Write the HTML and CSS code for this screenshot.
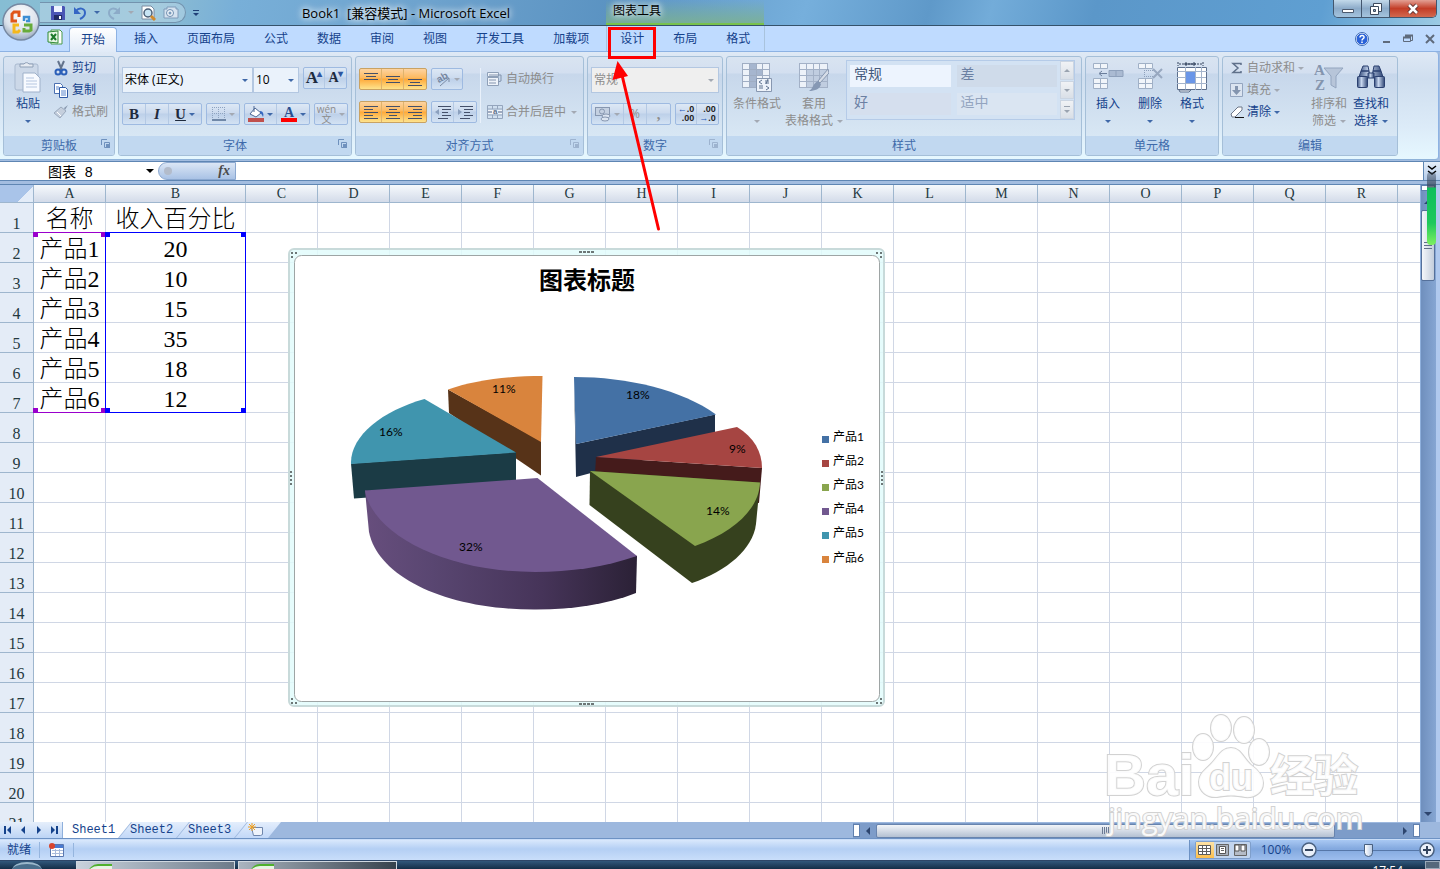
FILE: index.html
```
<!DOCTYPE html>
<html lang="zh-CN">
<head>
    <meta charset="UTF-8">
    <meta name="viewport" content="width=device-width, initial-scale=1.0">
    <title>Book1 - Microsoft Excel</title>
    <link rel="stylesheet" href="styles.css">
</head>
<body>

<!-- Title bar -->
<header class="titlebar">
    <div class="quick-access">
        <button class="qa-btn" aria-label="保存"><svg width="16" height="16" viewBox="0 0 16 16"><path d="M1 1h13l1 1v13H1z" fill="#4a55b5"/><path d="M4 1h8v6H4z" fill="#eef3ff"/><path d="M4 10h8v5H4z" fill="#222c66"/><path d="M9 11h2v3H9z" fill="#fff"/></svg></button>
        <button class="qa-btn undo" aria-label="撤消"><svg width="14" height="14" viewBox="0 0 14 14"><path d="M3 5c3-4 9-3 9 2 0 3-3 5-5 6" fill="none" stroke="#3566c4" stroke-width="2"/><path d="M1 1v7h7z" fill="#3566c4"/></svg><i class="caret"></i></button>
        <button class="qa-btn undo" aria-label="恢复" disabled><svg width="14" height="14" viewBox="0 0 14 14"><path d="M11 5c-3-4-9-3-9 2 0 3 3 5 5 6" fill="none" stroke="#8cabc8" stroke-width="2"/><path d="M13 1v7H6z" fill="#8cabc8"/></svg><i class="caret"></i></button>
        <button class="qa-btn" aria-label="打印预览"><svg width="16" height="16" viewBox="0 0 16 16"><path d="M2 1h9l3 3v10H2z" fill="#fff" stroke="#7a8aa0"/><circle cx="8" cy="8" r="4" fill="#c8e4f4" stroke="#4a5d75" stroke-width="1.500"/><path d="M11 11l4 4" stroke="#d08a2c" stroke-width="3"/></svg></button>
        <button class="qa-btn" aria-label="照相机" disabled><svg width="16" height="16" viewBox="0 0 16 16"><path d="M1 4h3V2h9v2h2v9H1z" fill="#d5e2ef" stroke="#7e9bb9"/><circle cx="7" cy="8" r="3.500" fill="#eef4fa" stroke="#6f8eb0"/><circle cx="7" cy="8" r="1.500" fill="#7a9abb"/></svg></button>
    </div>
    <button class="qa-more" aria-label="自定义快速访问工具栏"><svg width="8" height="8" viewBox="0 0 8 8"><path d="M1 1.500h6" stroke="#1f3f77"/><path d="M1 4h6L4 7z" fill="#1f3f77"/></svg></button>
    <div class="window-title">Book1&nbsp; [兼容模式] - Microsoft Excel</div>
    <div class="context-title">图表工具</div>
    <div class="window-buttons">
        <button aria-label="最小化"><svg width="14" height="12" viewBox="0 0 14 12"><path d="M1.500 6.500h11v3h-11z" fill="#fff" stroke="#4c5a6e"/></svg></button>
        <button aria-label="还原"><svg width="14" height="14" viewBox="0 0 14 14"><path d="M4.500 1.500h8v8h-8z" fill="#fff" stroke="#3d4a5d"/><path d="M1.500 4.500h8v8h-8z" fill="#fff" stroke="#3d4a5d"/><path d="M4.500 7.500h2v2h-2z" fill="#8ea6c2" stroke="#3d4a5d"/></svg></button>
        <button class="close" aria-label="关闭"><svg width="14" height="12" viewBox="0 0 14 12"><path d="M3 2l8 8M11 2l-8 8" stroke="#5a3030" stroke-width="4.500"/><path d="M3 2l8 8M11 2l-8 8" stroke="#fff" stroke-width="2.500"/></svg></button>
    </div>
</header>

<!-- Ribbon tabs -->
<nav class="tabs">
    <svg class="excel-mark" width="16" height="16" viewBox="0 0 16 16"><path d="M4 1h9l2 2v12H4z" fill="#fff" stroke="#4a9a4a"/><path d="M1 3l10-1v12L1 13z" fill="#e9f7e6" stroke="#2f8a35"/><path d="M4 5l5 6M9 5l-5 6" stroke="#1d7a2c" stroke-width="2"/></svg>
    <a href="#" class="tab active">开始</a>
    <a href="#" class="tab">插入</a>
    <a href="#" class="tab">页面布局</a>
    <a href="#" class="tab">公式</a>
    <a href="#" class="tab">数据</a>
    <a href="#" class="tab">审阅</a>
    <a href="#" class="tab">视图</a>
    <a href="#" class="tab">开发工具</a>
    <a href="#" class="tab">加载项</a>
    <div class="context-tabs">
        <a href="#" class="tab">设计</a>
        <a href="#" class="tab">布局</a>
        <a href="#" class="tab">格式</a>
    </div>
    <div class="book-buttons">
        <button aria-label="帮助"><svg width="14" height="14" viewBox="0 0 14 14"><circle cx="7" cy="7" r="6" fill="#2a62d8" stroke="#fff"/><circle cx="7" cy="7" r="6.500" fill="none" stroke="#3c69b4"/><path d="M5 5.500c0-3 4.500-2.500 4 0C8.700 6.800 7 6.800 7 8.500M7 9.500v1.500" fill="none" stroke="#fff" stroke-width="1.500"/></svg></button>
        <button aria-label="最小化窗口"><svg width="10" height="10" viewBox="0 0 10 10"><path d="M2 8h7" stroke="#5f6b7c" stroke-width="2"/></svg></button>
        <button aria-label="还原窗口"><svg width="10" height="10" viewBox="0 0 10 10"><path d="M2.500 3V1.500h7v5H8M.5 3.500h7v4h-7z" fill="none" stroke="#5f6b7c"/><path d="M2 1.500h8M0 3.500h8" stroke="#5f6b7c" stroke-width="2"/></svg></button>
        <button aria-label="关闭窗口"><svg width="10" height="10" viewBox="0 0 10 10"><path d="M1 1l8 8M9 1L1 9" stroke="#5f6b7c" stroke-width="2"/></svg></button>
    </div>
</nav>

<!-- Office button -->
<button class="office-btn" aria-label="Office 按钮">
    <svg width="40" height="40" viewBox="0 0 40 40">
        <defs><radialGradient id="orb" cx="50%" cy="30%" r="75%"><stop offset="0" stop-color="#fff"/><stop offset=".6" stop-color="#dbe2ec"/><stop offset="1" stop-color="#8b9cb3"/></radialGradient></defs>
        <circle cx="20" cy="20" r="18" fill="url(#orb)" stroke="#7688a2" stroke-width="1.500"/>
        <g fill="none" stroke-width="3">
            <path d="M16 19h-5v-7l2-2h5v5" stroke="#e0561b"/>
            <path d="M23 19v-4h5v4h-3" stroke="#3d8fd4" stroke-width="2.500"/>
            <path d="M18 23h-5v7h4l2-2" stroke="#f5b81c"/>
            <path d="M23 23h7v5l-2 1h-5v-3" stroke="#67ab3a"/>
        </g>
    </svg>
</button>

<!-- Ribbon -->
<section class="ribbon">
    <div class="group g-clipboard">
        <div class="group-body">
            <button class="big paste"><svg width="30" height="32" viewBox="0 0 30 32"><rect x="2" y="3" width="23" height="26" rx="2" fill="#ccd8e8" stroke="#a9b9cf"/><path d="M7 6h13V3h-4a3 3 0 0 0-5 0H7z" fill="#e6ebf2" stroke="#8e9fb6"/><path d="M10 12h12l5 5v14H10z" fill="#f7faff" stroke="#9fb1ca"/><path d="M13 17h8M13 20h11M13 23h11M13 26h11" stroke="#b5c6e0"/></svg><span>粘贴</span><i class="caret"></i></button>
            <div class="stack">
                <button class="row-btn"><svg width="16" height="16" viewBox="0 0 16 16"><path d="M5 1l4 9M11 1L7 10" stroke="#63738c" stroke-width="2"/><circle cx="5" cy="12" r="2.500" fill="none" stroke="#2c5fb8" stroke-width="2"/><circle cx="11" cy="12" r="2.500" fill="none" stroke="#2c5fb8" stroke-width="2"/></svg>剪切</button>
                <button class="row-btn"><svg width="16" height="16" viewBox="0 0 16 16"><path d="M1.500 1.500h6l2 2v8h-8z" fill="#fff" stroke="#4a6fb0"/><path d="M6.500 5.500h6l2 2v8h-8z" fill="#fff" stroke="#2f5aa6"/><path d="M3 5h3M3 7h3M8 9h5M8 11h5M8 13h5" stroke="#5a86cc"/></svg>复制</button>
                <button class="row-btn" disabled><svg width="16" height="16" viewBox="0 0 16 16"><path d="M15 1l-4 3 1 2z" fill="#8797ad"/><path d="M8 3l5 4-6 7-6-5z" fill="#c5cfdd" stroke="#9aa9bd"/><path d="M4 8l4 4" stroke="#fff"/></svg>格式刷</button>
            </div>
        </div>
        <div class="caption">剪贴板<svg class="launcher" width="9" height="9" viewBox="0 0 9 9"><path d="M.5 6V.5H6M3.500 3.500h5v5h-5z" fill="none" stroke="#6f91bd"/><path d="M5 5h4v4H5z" fill="#6f91bd"/></svg></div>
    </div>

    <div class="group g-font">
        <div class="group-body rows">
            <div class="line top">
                <div class="combos">
                    <label class="combo font-name"><select aria-label="字体"><option>宋体 (正文)</option></select><i class="caret"></i></label>
                    <label class="combo font-size"><select aria-label="字号"><option>10</option></select><i class="caret"></i></label>
                </div>
                <div class="btns">
                    <button class="serif grow" aria-label="增大字号">A<sup>▴</sup></button>
                    <button class="serif shrink" aria-label="减小字号">A<sup>▾</sup></button>
                </div>
            </div>
            <div class="line">
                <div class="btns"><button class="serif"><b>B</b></button><button class="serif"><em>I</em></button><button class="serif wide"><u>U</u><i class="caret"></i></button></div>
                <div class="btns"><button class="wide" disabled aria-label="边框"><svg width="14" height="14" viewBox="0 0 14 14"><path d="M.5 0v13M6.500 0v13M12.500 0v13M0 .5h13M0 6.500h13" stroke="#8ea3c0" stroke-dasharray="1 1"/><path d="M0 13h14" stroke="#7088a8" stroke-width="2"/></svg><i class="caret"></i></button></div>
                <div class="btns"><button class="wide" aria-label="填充颜色"><svg width="16" height="16" viewBox="0 0 16 16"><path d="M7 2l6 5-5 4-6-3z" fill="#fff" stroke="#4c6794"/><path d="M6 0v6" stroke="#4c6794"/><path d="M12 5c3 0 4 3 3 6-1-2-1-3-3-4z" fill="#3467c0"/><path d="M0 12h16v4H0z" fill="#c0504d"/></svg><i class="caret"></i></button><button class="wide" aria-label="字体颜色"><svg width="16" height="16" viewBox="0 0 16 16"><text class="font-a" x="3" y="11">A</text><path d="M0 12h16v4H0z" fill="#f00"/></svg><i class="caret"></i></button></div>
                <div class="btns"><button class="wide wen" disabled><span>wén<br>文</span><i class="caret"></i></button></div>
            </div>
        </div>
        <div class="caption">字体<svg class="launcher" width="9" height="9" viewBox="0 0 9 9"><path d="M.5 6V.5H6M3.500 3.500h5v5h-5z" fill="none" stroke="#6f91bd"/><path d="M5 5h4v4H5z" fill="#6f91bd"/></svg></div>
    </div>

    <div class="group g-align">
        <div class="group-body align-body">
            <div class="align-left">
                <div class="line">
                    <div class="btns hot">
                        <button aria-label="顶端对齐"><svg width="14" height="14" viewBox="0 0 14 14"><path d="M0 1.500h14M2 4.500h10M0 7.500h14" stroke="#44506a"/></svg></button>
                        <button aria-label="垂直居中"><svg width="14" height="14" viewBox="0 0 14 14"><path d="M0 4.500h14M2 7.500h10M0 10.500h14" stroke="#44506a"/></svg></button>
                        <button aria-label="底端对齐"><svg width="14" height="14" viewBox="0 0 14 14"><path d="M0 7.500h14M2 10.500h10M0 13.500h14" stroke="#44506a"/></svg></button>
                    </div>
                    <div class="btns"><button class="orient" disabled aria-label="方向"><svg width="16" height="16" viewBox="0 0 16 16"><text class="ab" x="2" y="10" transform="rotate(-30 7 8)">ab</text><path d="M5 15l9-8M10 7h4v4" fill="none" stroke="#7b8ba5"/></svg><i class="caret"></i></button></div>
                </div>
                <div class="line">
                    <div class="btns hot">
                        <button aria-label="文本左对齐"><svg width="14" height="14" viewBox="0 0 14 14"><path d="M0 1.500h14M0 4.500h9M0 7.500h14M0 10.500h9M0 13.500h14" stroke="#44506a"/></svg></button>
                        <button aria-label="居中"><svg width="14" height="14" viewBox="0 0 14 14"><path d="M0 1.500h14M3 4.500h8M0 7.500h14M3 10.500h8M0 13.500h14" stroke="#44506a"/></svg></button>
                        <button aria-label="文本右对齐"><svg width="14" height="14" viewBox="0 0 14 14"><path d="M0 1.500h14M5 4.500h9M0 7.500h14M5 10.500h9M0 13.500h14" stroke="#44506a"/></svg></button>
                    </div>
                    <div class="btns indent">
                        <button aria-label="减少缩进"><svg width="16" height="14" viewBox="0 0 16 14"><path d="M3 1.500h13M7 4.500h9M7 7.500h6M7 10.500h9M3 13.500h10" stroke="#44506a"/><path d="M0 7l4-3v6z" fill="#8ba0be"/></svg></button>
                        <button aria-label="增加缩进"><svg width="16" height="14" viewBox="0 0 16 14"><path d="M3 1.500h13M7 4.500h9M7 7.500h6M7 10.500h9M3 13.500h10" stroke="#44506a"/><path d="M5 7L1 4v6z" fill="#8ba0be"/></svg></button>
                    </div>
                </div>
            </div>
            <div class="align-right">
                <button class="row-btn" disabled><svg width="16" height="16" viewBox="0 0 16 16"><path d="M.5 1.500h11v4H.5zM.5 6.500h11v8H.5z" fill="#eef3fa" stroke="#8fa0b8"/><path d="M2 4h12v6l-3 1M2 9h7M2 12h7" fill="none" stroke="#8293ad"/></svg>自动换行</button>
                <button class="row-btn" disabled><svg width="16" height="16" viewBox="0 0 16 16"><path d="M.5 1.500h15v13H.5zM5.500 1v4M10.500 1v4M5.500 11v4M10.500 11v4M0 5h16M0 11h16" fill="none" stroke="#94a5bd"/><path d="M1 6h14v4H1z" fill="#f4f7fb"/><text class="tiny-a" x="6" y="10">a</text><path d="M1 8h4M15 8h-4" stroke="#8293ad" stroke-width="1.500"/></svg>合并后居中<i class="caret"></i></button>
            </div>
        </div>
        <div class="caption">对齐方式<svg class="launcher" width="9" height="9" viewBox="0 0 9 9"><path d="M.5 6V.5H6M3.500 3.500h5v5h-5z" fill="none" stroke="#9db3cf"/><path d="M5 5h4v4H5z" fill="#9db3cf"/></svg></div>
    </div>

    <div class="group g-number">
        <div class="group-body rows">
            <div class="line top">
                <label class="combo number-format"><select disabled aria-label="数字格式"><option>常规</option></select><i class="caret off"></i></label>
            </div>
            <div class="line">
                <div class="btns">
                    <button class="wide" disabled aria-label="会计数字格式"><svg width="16" height="16" viewBox="0 0 16 16"><rect x=".5" y="1.500" width="14" height="8" fill="#c4d0e1" stroke="#8797b0"/><circle cx="7" cy="5.500" r="2.500" fill="none" stroke="#8797b0"/><ellipse cx="11" cy="10" rx="4" ry="2" fill="#dce5f1" stroke="#8797b0"/><ellipse cx="10" cy="13" rx="4" ry="2" fill="#dce5f1" stroke="#8797b0"/></svg><i class="caret"></i></button>
                    <button disabled>%</button>
                    <button class="serif" disabled><b>,</b></button>
                </div>
                <div class="btns">
                    <button class="dec" aria-label="增加小数位数"><span><s>←</s>.0<br>.00</span></button>
                    <button class="dec" aria-label="减少小数位数"><span>.00<br><s>→</s>.0</span></button>
                </div>
            </div>
        </div>
        <div class="caption">数字<svg class="launcher" width="9" height="9" viewBox="0 0 9 9"><path d="M.5 6V.5H6M3.500 3.500h5v5h-5z" fill="none" stroke="#9db3cf"/><path d="M5 5h4v4H5z" fill="#9db3cf"/></svg></div>
    </div>

    <div class="group g-styles">
        <div class="group-body">
            <button class="big cond" disabled><svg width="30" height="30" viewBox="0 0 30 30"><path d="M.5 1.500h27v24H.5z" fill="#edf2f9"/><path d="M7 1h7v24H7zM14 7h7v6h-7z" fill="#a6b6cf"/><path d="M.5 1v24M7.500 1v24M14.500 1v24M20.500 1v24M27.500 1v24M0 1.500h28M0 7.500h28M0 13.500h28M0 19.500h28M0 25.500h28" stroke="#9fadc3"/><path d="M14.500 16.500h15v13h-15z" fill="#eef3fa" stroke="#8797b0"/><path d="M20 18l-3 2 3 2M17 24h4M17 26h4M23 19h4M23 21h4M26 17l-2 5M24 24l3 2-3 2" fill="none" stroke="#5f728f"/></svg><span>条件格式</span><i class="caret"></i></button>
            <button class="big tablefmt" disabled><svg width="30" height="30" viewBox="0 0 30 30"><path d="M.5 1.500h28v24H.5z" fill="#edf2f9"/><path d="M7 7h21v18H7z" fill="#c0cde0"/><path d="M.5 1v24M7.500 1v24M14.500 1v24M20.500 1v24M28.500 1v24M0 1.500h29M0 7.500h29M0 13.500h29M0 19.500h29M0 25.500h29" stroke="#a3b1c7"/><path d="M29 7l1 4-9 10-2-2z" fill="#d5dce7" stroke="#8797b0"/><path d="M19 19l3 3c-1 5-6 7-12 7 4-2 4-8 9-10z" fill="#8698b4"/></svg><span>套用<br>表格格式 <i class="caret"></i></span></button>
            <div class="gallery">
                <div class="gallery-items">
                    <button class="s-normal">常规</button>
                    <button class="s-bad">差</button>
                    <button class="s-good">好</button>
                    <button class="s-mid">适中</button>
                </div>
                <div class="gallery-scroll">
                    <button aria-label="上一行"><i class="caret up"></i></button>
                    <button aria-label="下一行"><i class="caret"></i></button>
                    <button class="more" aria-label="其他"><i class="caret"></i></button>
                </div>
            </div>
        </div>
        <div class="caption">样式</div>
    </div>

    <div class="group g-cells">
        <div class="group-body">
            <button class="big"><svg width="32" height="30" viewBox="0 0 32 30"><path d="M1.500 1.500h14v5h-14zM8.500 1v6M1.500 16.500h14v10h-14zM8.500 16v11M1 21.500h15" fill="#f1f5fa" stroke="#a0b0c6"/><path d="M17 8.500h14v6H17zM24 8v6" fill="#aabad2" stroke="#8ea0bb"/><path d="M15 11.500H8M10 9l-3 2.500 3 2.500" fill="none" stroke="#6a7d9b"/></svg><span>插入</span><i class="caret"></i></button>
            <button class="big"><svg width="32" height="30" viewBox="0 0 32 30"><path d="M4.500 1.500h14v5h-14zM11.500 1v6M4.500 16.500h14v10h-14zM11.500 16v11M4 21.500h15" fill="#f1f5fa" stroke="#a0b0c6"/><path d="M10 8.500h12M10 14.500h12M10.500 8v6" stroke="#8ea0bb" stroke-dasharray="1 1"/><path d="M19 7l9 9M28 7l-9 9" stroke="#98a8c0" stroke-width="2"/></svg><span>删除</span><i class="caret"></i></button>
            <button class="big"><svg width="32" height="30" viewBox="0 0 32 30"><path d="M2 0v4M27 0v4M3 2h23" stroke="#33435c" stroke-dasharray="2 1"/><path d="M8 2h12M10 0v4M18 0v4" stroke="#33435c"/><path d="M1.500 5.500h29v22h-29z" fill="#fff" stroke="#5d6f8c"/><path d="M10 10h9v11h-9z" fill="#6a96e8"/><path d="M9.500 5v23M19.500 5v23M25.500 5v23M1 9.500h30M1 21.500h30M1 15.500h8M20 15.500h10" stroke="#a4b4cc"/><path d="M3 28h12l-2 2H4z" fill="#f2f5fa" stroke="#5d6f8c"/></svg><span>格式</span><i class="caret"></i></button>
        </div>
        <div class="caption">单元格</div>
    </div>

    <div class="group g-edit">
        <div class="group-body">
            <div class="stack">
                <button class="row-btn" disabled><svg width="14" height="16" viewBox="0 0 14 16"><path d="M11 5V3.500H3L8 8l-5 4.500h8V11" fill="none" stroke="#5f708a" stroke-width="1.500"/></svg>自动求和<i class="caret"></i></button>
                <button class="row-btn" disabled><svg width="14" height="16" viewBox="0 0 14 16"><path d="M.5 1.500h12v13H.5z" fill="#dbe4f0" stroke="#94a5bf"/><path d="M5 4h3v4h3l-4.500 5L2 8h3z" fill="#8495af"/></svg>填充<i class="caret"></i></button>
                <button class="row-btn"><svg width="14" height="16" viewBox="0 0 14 16"><path d="M1 10l7-7h4v3l-7 7H2z" fill="#fff" stroke="#6d7688"/><path d="M5 13.500h9" stroke="#111"/></svg>清除<i class="caret"></i></button>
            </div>
            <button class="big sort" disabled><svg width="30" height="30" viewBox="0 0 30 30"><text class="az" x="0" y="13">A</text><text class="az" x="1" y="28">Z</text><path d="M10 6h19l-7 8v12l-5-3v-9z" fill="#b7c5d9" stroke="#93a5bf"/></svg><span>排序和<br>筛选 <i class="caret"></i></span></button>
            <button class="big find"><svg width="30" height="30" viewBox="0 0 30 30"><defs><linearGradient id="lens"><stop offset="0" stop-color="#38507f"/><stop offset=".4" stop-color="#c7d6ee"/><stop offset="1" stop-color="#2f4675"/></linearGradient></defs><g fill="url(#lens)" stroke="#2b4070"><path d="M7 4h5l1 5H5zM18 4h5l2 5h-8zM5 9h8l1 6H3zM17 9h8l2 6H16z"/><rect x="1.500" y="14.500" width="10" height="11" rx="1"/><rect x="18.500" y="14.500" width="10" height="11" rx="1"/><path d="M12 11h6v5h-6z"/></g></svg><span>查找和<br>选择 <i class="caret"></i></span></button>
        </div>
        <div class="caption">编辑</div>
    </div>
</section>

<!-- Formula bar -->
<section class="formula-bar">
    <input class="name-box" type="text" value="图表 8" aria-label="名称框">
    <button class="name-drop" aria-label="名称列表"><i class="caret"></i></button>
    <div class="fx"><span class="knob"></span><button aria-label="插入函数"><em>fx</em></button></div>
    <input class="formula" type="text" aria-label="编辑栏">
    <button class="expand" aria-label="展开编辑栏"><svg width="10" height="12" viewBox="0 0 10 12"><path d="M1 1l4 3 4-3M1 6l4 3 4-3" fill="none" stroke="#000" stroke-width="1.500"/></svg></button>
</section>

<!-- Worksheet -->
<main class="workbook">
    <div class="grid">
        <table class="sheet" id="sheet"></table>

        <!-- source ranges of the chart -->
        <div class="range names"><i></i><i></i><i></i><i></i></div>
        <div class="range values"><i></i><i></i><i></i><i></i></div>

        <svg class="chart" width="597" height="460" viewBox="288 248 597 460" role="img" aria-label="图表标题">
            <defs>
                <linearGradient id="purpleSide"><stop offset="0" stop-color="#674e7d"/><stop offset=".25" stop-color="#594671"/><stop offset=".65" stop-color="#463459"/><stop offset="1" stop-color="#2b2136"/></linearGradient>
            </defs>
            <rect x="289" y="249" width="595" height="457" rx="5" fill="#e2fbfb" fill-opacity=".85" stroke="#c8dada" stroke-width="2"/>
            <rect x="294.500" y="255.500" width="585" height="446" rx="7" fill="#fff" stroke="#9ea5a5"/>
            <g fill="#6d7777">
                <path d="M291 252h2v2h-2zM295 252h2v2h-2zM291 256h2v2h-2zM876 252h2v2h-2zM880 252h2v2h-2zM880 256h2v2h-2z"/>
                <path d="M291 698h2v2h-2zM291 702h2v2h-2zM295 702h2v2h-2zM880 698h2v2h-2zM880 702h2v2h-2zM876 702h2v2h-2z"/>
                <path d="M579 251h3v2h-3zM583 251h3v2h-3zM587 251h3v2h-3zM591 251h3v2h-3zM579 703h3v2h-3zM583 703h3v2h-3zM587 703h3v2h-3zM591 703h3v2h-3z"/>
                <path d="M290 471h2v2h-2zM290 475h2v2h-2zM290 479h2v2h-2zM290 483h2v2h-2zM881 471h2v2h-2zM881 475h2v2h-2zM881 479h2v2h-2zM881 483h2v2h-2z"/>
            </g>
            <text class="chart-title" x="587" y="289">图表标题</text>

            <path d="M574 377L576 477L715 440V414.500L576 444z" fill="#1f3049"/>
            <path d="M574 377C628 377 682 390 716 414.500L576 444z" fill="#4471a5"/>
            <path d="M448 389.500L541 441V475.500L449 413z" fill="#573318"/>
            <path d="M448 389.500C475 380 508 376 542.500 376L541 442z" fill="#d9843d"/>
            <path d="M351 463.500L516 452V487L354 498.500z" fill="#1b3b45"/>
            <path d="M424.500 399C382 411 350 436 351 464L516 452.500z" fill="#4095ae"/>
            <path d="M596 457L762 468L759 503L595 475z" fill="#451b1b"/>
            <path d="M596 457L737 427C754 437 762 452 762 468z" fill="#a64542"/>
            <path d="M590 471L760 482.500L756 524C753 549 727 571 692 583L589.500 505z" fill="#36411e"/>
            <path d="M590 471L760 482.500C759 508 736 531 695 546z" fill="#89a54e"/>
            <path d="M365 490.500L369 532C378 577 446 610 536 609.500C575 609 605 605 636 593L637 556z" fill="url(#purpleSide)"/>
            <path d="M365 490.500L537.500 478L637 556C605 567 570 572 535 572C443 572 372 533 365 490.500z" fill="#71588f"/>

            <g class="pct">
                <text x="626" y="399">18%</text>
                <text x="729" y="453">9%</text>
                <text x="706" y="515">14%</text>
                <text x="459" y="551">32%</text>
                <text x="379" y="436">16%</text>
                <text x="492" y="393">11%</text>
            </g>
            <g class="legend">
                <path d="M822 436h7v7h-7z" fill="#4471a5"/><text x="833" y="441">产品1</text>
                <path d="M822 460h7v7h-7z" fill="#a64542"/><text x="833" y="465">产品2</text>
                <path d="M822 484h7v7h-7z" fill="#89a54e"/><text x="833" y="489">产品3</text>
                <path d="M822 508h7v7h-7z" fill="#71588f"/><text x="833" y="513">产品4</text>
                <path d="M822 532h7v7h-7z" fill="#4095ae"/><text x="833" y="537">产品5</text>
                <path d="M822 556h7v7h-7z" fill="#d9843d"/><text x="833" y="562">产品6</text>
            </g>
        </svg>
    </div>
    <div class="vscroll">
        <span class="split"></span>
        <i class="caret up"></i>
        <span class="thumb"></span>
        <i class="caret"></i>
    </div>
</main>

<!-- Sheet tabs -->
<section class="sheet-bar">
    <div class="sheet-nav">
        <button aria-label="第一张"><svg width="8" height="8" viewBox="0 0 8 8"><path d="M1 0v8" stroke="#15428b" stroke-width="2"/><path d="M7 0v8L3 4z" fill="#15428b"/></svg></button>
        <button aria-label="上一张"><svg width="8" height="8" viewBox="0 0 8 8"><path d="M6 0v8L2 4z" fill="#15428b"/></svg></button>
        <button aria-label="下一张"><svg width="8" height="8" viewBox="0 0 8 8"><path d="M2 0v8l4-4z" fill="#15428b"/></svg></button>
        <button aria-label="最后一张"><svg width="8" height="8" viewBox="0 0 8 8"><path d="M7 0v8" stroke="#15428b" stroke-width="2"/><path d="M1 0v8l4-4z" fill="#15428b"/></svg></button>
    </div>
    <a href="#" class="sheet-tab current">Sheet1</a>
    <a href="#" class="sheet-tab">Sheet2</a>
    <a href="#" class="sheet-tab">Sheet3</a>
    <a href="#" class="sheet-tab new" aria-label="插入工作表"><svg width="16" height="14" viewBox="0 0 16 14"><path d="M3.500 4.500h11v7l-2 1h-7z" fill="#eef3fb" stroke="#6f86ac"/><path d="M4 0v8M0 4h8M1 1l6 6M7 1L1 7" stroke="#f0a020"/></svg></a>
    <div class="hscroll">
        <span class="split"></span>
        <i class="caret left"></i>
        <span class="thumb"><i></i></span>
        <span class="track"></span>
        <i class="caret right"></i>
        <span class="split"></span>
    </div>
</section>

<!-- Status bar -->
<footer class="status">
    <span class="ready">就绪</span>
    <button class="macro" aria-label="录制宏"><svg width="16" height="14" viewBox="0 0 16 14"><path d="M1.500 1.500h13v12h-13z" fill="#fff" stroke="#5a78b0"/><path d="M2 2h12v3H2z" fill="#4a7ad0"/><path d="M3 7.500h11M3 10.500h11M6.500 6v7M10.500 6v7" stroke="#a9bbdb"/><circle cx="3" cy="3" r="3" fill="#d8442c"/></svg></button>
    <div class="status-right">
        <div class="views">
            <button class="on" aria-label="普通"><svg width="14" height="12" viewBox="0 0 14 12"><path d="M.5 1.500h12v9H.5zM4.500 1v10M8.500 1v10M0 4.500h13M0 7.500h13" fill="#fff" stroke="#5c5c5c"/></svg></button>
            <button aria-label="页面布局"><svg width="14" height="12" viewBox="0 0 14 12"><path d="M.5.5h12v11H.5z" fill="#a9b1bd" stroke="#666"/><path d="M3.500 2.500h6v7h-6z" fill="#fff" stroke="#555"/><path d="M5 4.500h3M5 6.500h3" stroke="#666"/></svg></button>
            <button aria-label="分页预览"><svg width="14" height="12" viewBox="0 0 14 12"><path d="M.5.5h12v11H.5z" fill="#b5bcc7" stroke="#666"/><path d="M1 1h4v6H1zM7 1h4v6H7z" fill="#fff" stroke="#555"/></svg></button>
        </div>
        <span class="zoom-value">100%</span>
        <button class="round" aria-label="缩小"><svg width="16" height="16" viewBox="0 0 16 16"><circle cx="8" cy="8" r="7" fill="#e9f0fa" stroke="#49607f" stroke-width="1.500"/><path d="M4 8h8" stroke="#33445e" stroke-width="2"/></svg></button>
        <input class="zoom" type="range" min="0" max="100" value="50" aria-label="显示比例">
        <button class="round" aria-label="放大"><svg width="16" height="16" viewBox="0 0 16 16"><circle cx="8" cy="8" r="7" fill="#e9f0fa" stroke="#49607f" stroke-width="1.500"/><path d="M4 8h8M8 4v8" stroke="#33445e" stroke-width="2"/></svg></button>
    </div>
</footer>

<!-- Windows taskbar -->
<div class="taskbar">
    <span class="start"></span>
    <span class="task"><i></i></span>
    <span class="task dark"><i></i></span>
    <span class="clock">17:54</span>
    <span class="peek"></span>
</div>

<!-- Site mark -->
<svg class="site-mark" width="270" height="130" viewBox="1100 710 270 130">
    <g class="outlined">
        <text class="m-bai" x="1104" y="795">Bai</text>
        <ellipse cx="1203" cy="747" rx="10" ry="13"/>
        <ellipse cx="1221" cy="728" rx="10" ry="13"/>
        <ellipse cx="1244" cy="730" rx="10" ry="13"/>
        <ellipse cx="1259" cy="752" rx="10" ry="13"/>
        <path d="M1231 748c10 0 12 10 20 17 8 6 12 11 12 18 0 10-9 15-18 14-9-2-19-2-28 0-9 1-18-5-18-15 0-8 6-12 12-18 7-7 10-16 20-16z"/>
        <text class="m-du" x="1209" y="790">du</text>
        <text class="m-cn" x="1270" y="792">经验</text>
        <text class="m-url" x="1108" y="829">jingyan.baidu.com</text>
    </g>
</svg>

<div class="green-mark"></div>

<!-- Pointer to the design tab -->
<svg class="pointer" width="60" height="210" viewBox="604 24 60 210">
    <rect x="609.500" y="28.500" width="45" height="29" fill="none" stroke="#f00" stroke-width="3"/>
    <path d="M658.500 229L622 75" stroke="#f00" stroke-width="3" stroke-linecap="round"/>
    <path d="M617.500 61L612.500 80L628 76z" fill="#f00"/>
</svg>

<script>
    var letters = 'ABCDEFGHIJKLMNOPQRSTUVWXYZ'.split('');
    var data = [
        ['名称', '收入百分比'],
        ['产品1', 20],
        ['产品2', 10],
        ['产品3', 15],
        ['产品4', 35],
        ['产品5', 18],
        ['产品6', 12]
    ];

    function buildSheet(rows) {
        var html = '<colgroup><col class="c-head"><col class="c-std"><col class="c-wide">';
        for (var i = 2; i < letters.length; i++) {
            html += '<col class="c-std">';
        }
        html += '</colgroup><thead><tr><th class="corner"></th>';
        letters.forEach(function(l) {
            html += '<th scope="col">' + l + '</th>';
        });
        html += '</tr></thead><tbody>';
        for (var r = 0; r < rows; r++) {
            html += '<tr><th scope="row">' + (r + 1) + '</th>';
            for (var c = 0; c < letters.length; c++) {
                var value = data[r] && data[r][c] !== undefined ? data[r][c] : '';
                html += '<td>' + value + '</td>';
            }
            html += '</tr>';
        }
        document.getElementById('sheet').innerHTML = html + '</tbody>';
    }

    buildSheet(40);
</script>

</body>
</html>
```
FILE: styles.css
```
* {
    box-sizing: border-box;
}
body {
    margin: 0;
    height: 100vh;
    display: flex;
    flex-direction: column;
    overflow: hidden;
    position: relative;
    background-color: #a3bde0;
    font-family: "Open Sans", "Noto Sans CJK SC", sans-serif;
    font-size: 12px;
    line-height: 16px;
    color: #15428b;
}
button, input, select {
    font: inherit;
    color: inherit;
    margin: 0;
    padding: 0;
    border: none;
    background: none;
}
button {
    display: flex;
    align-items: center;
    justify-content: center;
    white-space: nowrap;
}
button:disabled {
    color: #8d8d8d;
}
a {
    color: inherit;
    text-decoration: none;
}
svg {
    display: block;
    flex: none;
}
.caret {
    display: inline-block;
    flex: none;
    width: 0;
    height: 0;
    border: 3px solid transparent;
    border-top-color: #3f68a8;
    border-bottom: none;
}
.caret.up {
    transform: rotate(180deg);
}
:disabled .caret, .caret.off {
    border-top-color: #a3a9b3;
}

/* Title bar */
.titlebar {
    flex: none;
    height: 26px;
    display: flex;
    border-bottom: 1px solid #35526b;
    background: linear-gradient(105deg, #86bdd4 0, #8dbdd2 150px, #78afd8 230px, #6da2cd 420px, #5b93c2 590px, #76afdc 780px, #5f99c9 900px, #73acd9 960px, #5b97c9 1060px, #5f9fd2 1280px, #9ccbe4 100%);
}
.quick-access {
    width: 146px;
    height: 21px;
    margin: 2px 0 0 40px;
    padding: 0 6px 0 10px;
    display: flex;
    align-items: center;
    justify-content: space-between;
    border: 1px solid #7393ae;
    border-left: none;
    border-radius: 0 11px 11px 0;
    background-color: rgba(190, 218, 234, 0.5);
}
.qa-btn {
    gap: 7px;
}
.qa-more {
    width: 20px;
}
.window-title {
    width: 400px;
    padding-top: 5px;
    text-align: center;
    font-size: 13px;
    color: #000;
    text-shadow: 0 0 6px #fff, 0 0 8px #fff;
}
.context-title {
    width: 158px;
    padding: 3px 0 0 7px;
    color: #000;
    text-shadow: 0 0 6px #fff, 0 0 8px #fff;
    background: linear-gradient(rgba(130, 180, 160, 0), rgba(125, 178, 140, 0.8));
    border-bottom: 2px solid #78c24c;
}
.window-buttons {
    margin: 0 3px 0 auto;
    height: 18px;
    display: flex;
    border: 1px solid #42566e;
    border-top: none;
    border-radius: 0 0 5px 5px;
    overflow: hidden;
}
.window-buttons button {
    width: 28px;
    background: linear-gradient(#c3d9ea, #8cabc9 50%, #a5c4de);
    border-right: 1px solid #42566e;
}
.window-buttons .close {
    width: 46px;
    border: none;
    background: linear-gradient(#e3a094, #c33d27 50%, #d2694f);
}

/* Ribbon tabs */
.tabs {
    flex: none;
    height: 26px;
    padding-left: 47px;
    display: flex;
    gap: 5px;
    background-color: #bfdbff;
    border-bottom: 1px solid #8db2e3;
}
.excel-mark {
    margin: 3px 1px 0 0;
}
.tab {
    padding: 5px 12px;
}
.tab.active {
    height: 25px;
    margin-top: 1px;
    padding: 4px 11px;
    border: 1px solid #8db2e3;
    border-bottom: none;
    border-radius: 4px 4px 0 0;
    background: linear-gradient(#fff, #e0eaf7);
}
.context-tabs {
    display: flex;
    gap: 5px;
    padding-right: 2px;
    border-left: 1px solid #a9c3dd;
    border-right: 1px solid #a9c3dd;
}
.context-tabs .tab:first-child {
    padding-left: 13px;
}
.book-buttons {
    margin: 5px 5px 0 auto;
    height: 16px;
    display: flex;
    gap: 12px;
    align-items: center;
}
.office-btn {
    position: absolute;
    left: 1px;
    top: 2px;
}

/* Ribbon */
.ribbon {
    flex: none;
    height: 108px;
    margin-right: 1px;
    padding: 4px 3px;
    display: flex;
    gap: 3px;
    border-bottom: 1px solid #8fb3d9;
    border-right: 1px solid #8db2e3;
    border-radius: 0 4px 4px 0;
    background: linear-gradient(#dfe9f5, #cfdeef 25%, #dcebf8 70%, #e6f8ff);
}
.group {
    flex: none;
    display: flex;
    flex-direction: column;
    height: 100px;
    border: 1px solid #a5bfd8;
    border-radius: 3px;
    background: linear-gradient(#d9e4f1, #d3dff0 16px, #c7d7eb 17px, #d8e7f4 80px);
    overflow: hidden;
}
.g-clipboard { width: 112px; }
.g-font { width: 234px; }
.g-align { width: 229px; }
.g-number { width: 136px; }
.g-styles { width: 356px; }
.g-cells { width: 134px; }
.g-edit { width: 176px; }
.group-body {
    flex: 1;
    display: flex;
    padding: 0 3px;
}
.g-cells .group-body {
    padding: 0 1px;
}
.caption {
    height: 19px;
    line-height: 19px;
    display: grid;
    grid-template-columns: 18px 1fr 18px;
    justify-items: center;
    background-color: #c1d8f0;
    color: #3e6aaa;
}
.caption::before {
    content: "";
}
.launcher {
    margin-top: 3px;
}
.big {
    width: 42px;
    padding-top: 4px;
    flex-direction: column;
    justify-content: flex-start;
}
.big svg {
    height: 32px;
}
.big span {
    line-height: 17px;
    margin-top: 2px;
}
.big > .caret {
    margin-top: 8px;
}
.big span .caret {
    margin-left: 1px;
    vertical-align: middle;
}
.stack {
    display: flex;
    flex-direction: column;
}
.row-btn {
    height: 22px;
    gap: 5px;
    justify-content: flex-start;
}
.stack .row-btn {
    gap: 3px;
}
.paste {
    margin-right: 4px;
}
.line {
    display: flex;
    gap: 4px;
}
.rows {
    flex-direction: column;
    padding-top: 10px;
    gap: 10px;
}
.rows .top {
    height: 26px;
}
.combos {
    display: flex;
}
.combo {
    display: grid;
    height: 26px;
    border: 1px solid #b3c7e1;
    background-color: #eaf2fb;
    color: #000;
}
.combo select {
    grid-area: 1 / 1;
    appearance: none;
    padding: 0 2px;
    opacity: 1;
}
.combo .caret {
    grid-area: 1 / 1;
    place-self: center end;
    margin-right: 4px;
}
.font-name { width: 131px; }
.font-size { width: 46px; }
.number-format {
    width: 128px;
    background-color: #efefef;
    color: #8d8d8d;
}
.btns {
    display: flex;
    height: 22px;
    border: 1px solid #9ebae1;
    border-radius: 2px;
    background: linear-gradient(#dde8f5, #cbdaee 45%, #bdd0e9 50%, #d3e2f3);
}
.btns button {
    width: 23px;
    border-right: 1px solid #b4c9e4;
    gap: 3px;
}
.btns button:last-child {
    border-right: none;
}
.btns .wide {
    width: 32px;
}
.btns .orient {
    width: 30px;
}
.top .btns button, .btns .dec {
    width: 21px;
}
.btns.hot button, .btns.indent button {
    width: 22px;
}
.serif {
    font-family: "Liberation Serif", serif;
    font-size: 15px;
    font-weight: bold;
    color: #1e2a3d;
}
.serif em {
    font-weight: bold;
}
.grow {
    font-size: 17px;
}
.shrink {
    font-size: 14px;
}
.serif sup {
    font-size: 10px;
    line-height: 10px;
    margin: -8px 0 0 -4px;
    color: #2c55a0;
}
.font-a {
    font: bold 14px "Liberation Serif", serif;
    fill: #2b4f91;
}
.wen span {
    font-size: 10px;
    line-height: 10px;
}
.hot {
    border-color: #c9a263;
    background: linear-gradient(#fdd3a0, #fdb95e 45%, #fea93a 50%, #fee38c);
}
.hot button {
    border-color: #dfb36c;
}
.ab {
    font: bold 10px "Liberation Sans", sans-serif;
    fill: #76869f;
}
.align-body {
    padding-top: 11px;
}
.align-left {
    display: flex;
    flex-direction: column;
    gap: 11px;
    width: 122px;
    height: 55px;
    border-right: 1px solid #e9f1fb;
}
.align-right {
    display: flex;
    flex-direction: column;
    gap: 11px;
    padding-left: 6px;
}
.align-right .row-btn {
    gap: 3px;
}
.align-right .caret {
    margin-left: 2px;
}
.tiny-a {
    font: bold 8px "Liberation Sans", sans-serif;
    fill: #61728c;
}
.dec span {
    font: bold 9px/9px "Liberation Sans", sans-serif;
    color: #222;
    text-align: right;
}
.dec s {
    text-decoration: none;
    color: #2558b8;
}

/* Cell styles gallery */
.cond {
    width: 54px;
}
.tablefmt {
    width: 60px;
}
.gallery {
    display: flex;
    flex: 1;
    height: 60px;
    margin: 3px 3px 0 2px;
    border: 1px solid #b5cbe8;
    background-color: #d3e2f3;
}
.gallery-items {
    flex: 1;
    display: grid;
    grid-template-columns: 1fr 1fr;
    gap: 6px;
    padding: 4px 3px;
}
.gallery-items button {
    justify-content: flex-start;
    padding: 0 0 4px 4px;
    font-size: 14px;
    color: #6b80a3;
}
.gallery-items .s-normal {
    background-color: #edf4fe;
    color: #43597c;
}
.s-bad { background-color: #cfdbea; }
.s-good { background-color: #d5dfee; }
.gallery-items .s-mid {
    background-color: #dae5f2;
    color: #93a4bf;
}
.gallery-scroll {
    width: 14px;
    display: flex;
    flex-direction: column;
    gap: 1px;
}
.gallery-scroll button {
    flex: 1;
    flex-direction: column;
    border: 1px solid #cbd5e2;
    background: linear-gradient(#f0f2f5, #d9dfe7);
}
.gallery-scroll .caret {
    border-top-color: #9aa3b0;
}
.gallery-scroll .more::before {
    content: "";
    width: 6px;
    height: 1px;
    margin-bottom: 3px;
    background-color: #9aa3b0;
}
.g-edit .stack {
    width: 82px;
    padding-left: 4px;
}
.az {
    font: bold 15px "Liberation Serif", serif;
    fill: #8495ae;
}

/* Formula bar */
.formula-bar {
    flex: none;
    height: 20px;
    margin: 1px 0 3px;
    display: flex;
    border-top: 1px solid #5f86b3;
    border-bottom: 1px solid #5f86b3;
    background-color: #fff;
    color: #000;
}
.name-box {
    width: 142px;
    padding-left: 48px;
    font: 14px "Liberation Mono", "Noto Sans CJK SC", monospace;
}
.name-drop {
    width: 16px;
}
.name-drop .caret {
    border-width: 4px;
    border-bottom: none;
    border-top-color: #000;
}
.fx {
    width: 78px;
    display: flex;
    align-items: center;
    justify-content: space-between;
    padding: 0 5px;
    border: 1px solid #8ba8d0;
    border-radius: 9px 0 0 9px;
    background: linear-gradient(#dbe6f5, #a9c2e5);
}
.knob {
    width: 8px;
    height: 8px;
    border-radius: 50%;
    background-color: #b3bccb;
}
.fx em {
    font: italic bold 14px "Liberation Serif", serif;
    color: #4a4a4a;
}
.formula {
    flex: 1;
}
.expand {
    width: 17px;
    border-left: 1px solid #5f86b3;
    background: linear-gradient(#e6effa, #b4cbea);
}

/* Worksheet */
.workbook {
    flex: 1;
    min-height: 0;
    display: flex;
    border-top: 1px solid #5f86b3;
}
.grid {
    flex: 1;
    min-width: 0;
    position: relative;
    overflow: hidden;
    background-color: #fff;
}
.sheet {
    width: 1px;
    table-layout: fixed;
    border-collapse: separate;
    border-spacing: 0;
    color: #000;
}
.c-head { width: 34px; }
.c-std { width: 72px; }
.c-wide { width: 140px; }
.sheet th, .sheet td {
    padding: 0;
    height: 30px;
    border-right: 1px solid #d0d7e5;
    border-bottom: 1px solid #d0d7e5;
    text-align: center;
    white-space: nowrap;
    font-family: "Liberation Serif", "Noto Sans CJK SC", serif;
}
.sheet td {
    padding-top: 4px;
    font-size: 24px;
    line-height: 25px;
    font-weight: 300;
}
.sheet th {
    font-size: 16px;
    line-height: 16px;
    font-weight: normal;
    color: #24393f;
    background-color: #e4ecf7;
    border-color: #9eb6ce;
    vertical-align: bottom;
}
.sheet thead th {
    height: 18px;
    font-size: 14px;
    background: linear-gradient(#f6f9fc, #d3dbe9);
}
.sheet .corner {
    background: linear-gradient(135deg, #a9c4e9 70%, #e3ecf8 70%);
}
.range {
    position: absolute;
    top: 47px;
    height: 181px;
}
.range.names {
    left: 34px;
    width: 71px;
    border-top: 1px solid #9900cc;
    border-bottom: 1px solid #9900cc;
    color: #9900cc;
}
.range.values {
    left: 105px;
    width: 141px;
    border: 1px solid #0000ff;
    color: #0000ff;
}
.range i {
    position: absolute;
    width: 5px;
    height: 5px;
    background-color: currentColor;
}
.range i:nth-child(1) { left: -1px; top: -1px; }
.range i:nth-child(2) { right: -1px; top: -1px; }
.range i:nth-child(3) { left: -1px; bottom: -1px; }
.range i:nth-child(4) { right: -1px; bottom: -1px; }
.chart {
    position: absolute;
    left: 288px;
    top: 63px;
}
.chart-title {
    font: bold 24px "Noto Sans CJK SC", sans-serif;
    text-anchor: middle;
    fill: #000;
}
.pct {
    font: 12px Lato, sans-serif;
    fill: #000;
}
.legend text {
    font: 12px Lato, "Noto Sans CJK SC", sans-serif;
    fill: #000;
}
.vscroll {
    flex: none;
    width: 20px;
    display: flex;
    flex-direction: column;
    align-items: center;
    padding-right: 1px;
    border-left: 1px solid #8fb0dc;
    border-right: 4px solid #b0c9ee;
    background: linear-gradient(90deg, #6f8fbd, #86a6d3);
}
.vscroll .split {
    width: 14px;
    height: 6px;
    border: 1px solid #5f7fae;
    background-color: #fff;
}
.vscroll .caret, .hscroll .caret {
    border-width: 4px;
    border-bottom: none;
    border-top-color: #2d456e;
}
.vscroll .caret.up {
    margin: 9px 0 6px;
}
.vscroll .thumb {
    width: 14px;
    height: 71px;
    border: 1px solid #55709a;
    border-radius: 2px;
    background: repeating-linear-gradient(#5f6f88 0 1px, transparent 1px 3px) center / 8px 8px no-repeat, linear-gradient(90deg, #f4f7fa, #c3cddb);
}
.vscroll .caret:last-child {
    margin: auto 0 6px;
}

/* Sheet tabs */
.sheet-bar {
    flex: none;
    height: 17px;
    display: flex;
    background-color: #9db8de;
    border-bottom: 1px solid #6d92c4;
}
.sheet-nav {
    width: 63px;
    display: flex;
    align-items: center;
    justify-content: space-around;
    border-right: 1px solid #8fb0dc;
    background: linear-gradient(#e6effb, #bcd4f5);
}
.sheet-tab {
    width: 70px;
    margin-left: -12px;
    padding-left: 11px;
    font: 12px/17px "Liberation Mono", monospace;
    background: linear-gradient(#e4eefc, #c2d8f8);
    clip-path: polygon(13px 0, 100% 0, calc(100% - 13px) 100%, 0 100%);
}
.sheet-tab.current {
    width: 68px;
    margin-left: 0;
    padding-left: 9px;
    background: #fff;
    clip-path: polygon(0 0, 100% 0, calc(100% - 13px) 100%, 0 100%);
}
.sheet-tab.new {
    width: 46px;
    padding: 1px 0 0 13px;
}
.hscroll {
    flex: none;
    width: 567px;
    margin: 1px 20px 0 auto;
    display: flex;
    align-items: center;
    gap: 4px;
    background-color: #7d9cc9;
}
.hscroll .split {
    width: 7px;
    height: 13px;
    border: 1px solid #6080ae;
    background-color: #fff;
}
.hscroll .thumb {
    flex: 1;
    height: 14px;
    display: flex;
    align-items: center;
    justify-content: center;
    border: 1px solid #6884ae;
    border-radius: 2px;
    background: linear-gradient(#f2f5f9, #b3c0d2);
}
.hscroll .thumb i {
    width: 8px;
    height: 7px;
    background: repeating-linear-gradient(90deg, #6b7a92 0 1px, transparent 1px 2px);
}
.hscroll .track {
    width: 58px;
}
.caret.left {
    transform: rotate(90deg);
}
.caret.right {
    transform: rotate(-90deg);
}

/* Status bar */
.status {
    flex: none;
    height: 22px;
    display: flex;
    align-items: center;
    border-top: 1px solid #c9ddf8;
    background: linear-gradient(#d9e8fc, #b4cff4 45%, #c9defa);
    border-bottom: 1px solid #2d4668;
}
.ready {
    width: 40px;
    padding-left: 7px;
    border-right: 1px solid #95b5de;
}
.macro {
    width: 34px;
    border-right: 1px solid #95b5de;
}
.status-right {
    align-self: stretch;
    margin-left: auto;
    padding: 0 5px 0 5px;
    display: flex;
    align-items: center;
    border-left: 1px solid #6d92c4;
    background: linear-gradient(#a9c8f3, #82a8de 45%, #9dbeee);
}
.views {
    display: flex;
    border: 1px solid #7f9fcb;
    border-radius: 2px;
    background-color: #c2d5ee;
}
.views button {
    width: 18px;
    height: 16px;
}
.views .on {
    background: linear-gradient(#fde2a6, #fdbf4c);
}
.zoom-value {
    width: 50px;
    text-align: center;
}
.round {
    width: 16px;
}
.zoom {
    width: 102px;
    height: 16px;
    appearance: none;
    background: linear-gradient(#5677a8, #5677a8) center / 100% 1px no-repeat;
}
.zoom::-webkit-slider-thumb {
    appearance: none;
    width: 9px;
    height: 13px;
    border: 1px solid #49607f;
    border-radius: 0 0 5px 5px;
    background: linear-gradient(90deg, #fff, #b8cbe6);
}

/* Taskbar */
.taskbar {
    flex: none;
    height: 8px;
    display: flex;
    overflow: hidden;
    background: linear-gradient(#31577b, #132d47);
}
.start {
    width: 30px;
    height: 16px;
    margin: 1px 34px 0 12px;
    border-radius: 50%;
    border-top: 2px solid #9bb8cc;
    background-color: #496e8c;
}
.task {
    width: 159px;
    margin-right: 3px;
    border: 1px solid #d0d8e0;
    border-bottom: none;
    background: linear-gradient(90deg, #c9d2dc, #6d7b8a);
}
.task.dark {
    background: linear-gradient(90deg, #aab4bf, #36424d);
}
.task i {
    display: block;
    width: 24px;
    height: 10px;
    margin: 2px 0 0 11px;
    border-top: 2px solid #4fb02c;
    border-radius: 10px 0 0 0;
    background-color: #e8f3e4;
}
.clock {
    margin: 2px 22px 0 auto;
    color: #fff;
}
.peek {
    width: 15px;
    border: 1px solid #9aa9b8;
    background-color: #55687b;
}

/* Overlays */
.site-mark {
    position: absolute;
    right: 70px;
    bottom: 29px;
}
.outlined {
    fill: #fff;
    fill-opacity: 0.9;
    stroke: #d2d2d2;
    stroke-width: 2px;
    paint-order: stroke;
}
.m-bai {
    font: bold 58px "Liberation Sans", sans-serif;
}
.m-du {
    font: bold 36px "Liberation Sans", sans-serif;
}
.m-cn {
    font: bold 44px "Noto Sans CJK SC", sans-serif;
}
.m-url {
    font: 30px "Open Sans", sans-serif;
}
.green-mark {
    position: absolute;
    right: 4px;
    top: 172px;
    width: 9px;
    height: 73px;
    border-radius: 4px;
    background: linear-gradient(rgba(60, 75, 95, 0.4), rgba(60, 75, 95, 0.8) 15px, #0fbf5c 16px, #1fc85c 70%, #7df060);
}
.pointer {
    position: absolute;
    left: 604px;
    top: 24px;
}
```
